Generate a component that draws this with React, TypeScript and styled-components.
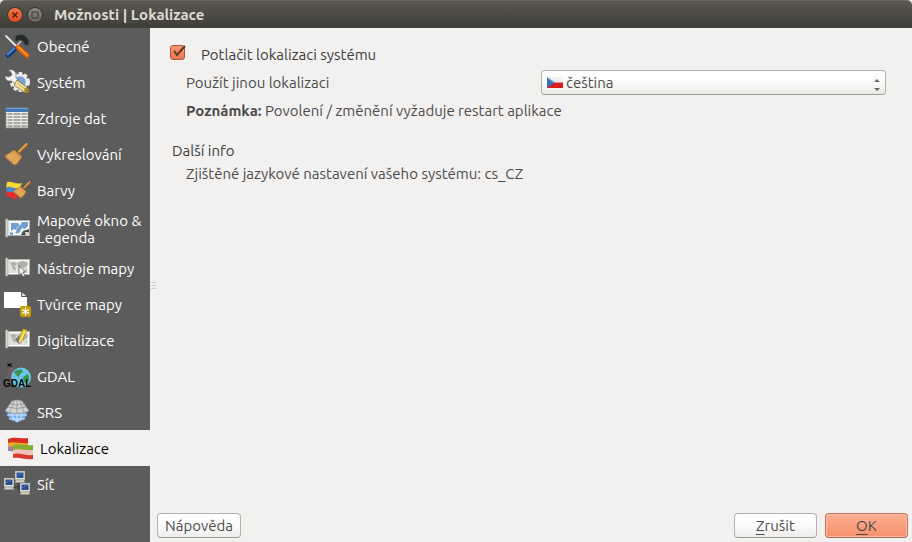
import React, { useState } from "react";
import styled, { createGlobalStyle, css } from "styled-components";

const GlobalStyle = createGlobalStyle`
  html, body, #root { height: 100%; }
  body { margin: 0; background: #f2f1f0; }
  *, *::before, *::after { box-sizing: border-box; }
  body, button, select, input {
    font-family: Ubuntu, "Noto Sans", "Open Sans", sans-serif;
    font-size: 15px;
    line-height: 17px;
    color: #4c4c4c;
  }
`;

const Dialog = styled.div`
  display: flex;
  flex-direction: column;
  min-height: 100%;
  background: #f2f1f0;
`;

const TitleBar = styled.header`
  display: flex;
  align-items: center;
  gap: 4px;
  height: 28px;
  padding: 0 7px;
  background: linear-gradient(#5a5850, #3e3d38);
  border-top: 1px solid #69675f;
  border-radius: 5px 5px 0 0;
`;

const WindowButton = styled.button<{ $close?: boolean }>`
  display: grid;
  place-items: center;
  width: 16px;
  height: 16px;
  padding: 0;
  border: 1px solid #35342f;
  border-radius: 50%;
  background: ${(p) => (p.$close ? "linear-gradient(#f4774e, #df4b1c)" : "linear-gradient(#8b8980, #67655d)")};
`;

const Title = styled.h1`
  margin: 0 0 0 7px;
  font-size: 15px;
  line-height: 20px;
  font-weight: 700;
  color: #dfdbd2;
`;

const Body = styled.div`
  display: flex;
  flex: 1;
`;

const Sidebar = styled.nav`
  display: flex;
  flex-direction: column;
  flex: 0 0 150px;
  background: #5c5c5c;
`;

const Item = styled.button<{ $selected: boolean }>`
  display: flex;
  align-items: center;
  gap: 6px;
  min-height: 36px;
  padding: 4px 4px 4px 3px;
  border: 0;
  background: none;
  color: #fff;
  text-align: left;
  svg { flex: none; }
  ${(p) =>
    p.$selected &&
    css`
      padding-left: 6px;
      background: #f2f1f0;
      color: #000;
    `}
`;

const Splitter = styled.div`
  display: flex;
  flex: 0 0 6px;
  align-items: center;
  justify-content: center;
`;

const Main = styled.main`
  display: flex;
  flex: 1;
  flex-direction: column;
  min-width: 0;
`;

const Settings = styled.section`
  flex: 1;
  padding: 13px 26px 0 14px;
`;

const CheckRow = styled.label`
  display: flex;
  align-items: center;
  gap: 14px;
  height: 26px;
  color: #3c3c3c;
`;

const CheckBox = styled.span`
  display: grid;
  margin-bottom: 4px;
  > * { grid-area: 1 / 1; }
  svg { pointer-events: none; }
`;

const CheckInput = styled.input`
  appearance: none;
  align-self: end;
  width: 15px;
  height: 15px;
  margin: 0;
  border: 1px solid #a9583e;
  border-radius: 3px;
  background: linear-gradient(#f79470, #ee7750);
  &:not(:checked) { border-color: #aaa; background: #fff; }
  &:not(:checked) + svg { visibility: hidden; }
`;

const Indented = styled.div`
  padding-left: 16px;
`;

const FieldRow = styled.div`
  display: grid;
  grid-template-columns: 1fr 1fr;
  column-gap: 10px;
  align-items: center;
  margin-top: 3px;
`;

const Picker = styled.div`
  position: relative;
`;

const LanguageSelect = styled.select`
  appearance: none;
  display: block;
  width: 100%;
  height: 25px;
  padding: 0 20px 0 24px;
  border: 1px solid #b4b2af;
  border-bottom-color: #9c9a97;
  border-radius: 4px;
  background: linear-gradient(#ffffff, #fbfbfa 50%, #e9e8e6);
`;

const FlagMark = styled.svg`
  position: absolute;
  left: 6px;
  top: 7px;
  pointer-events: none;
`;

const ArrowMark = styled.svg`
  position: absolute;
  right: 6px;
  top: 8px;
  pointer-events: none;
`;

const Note = styled.p`
  margin: 7px 0 0;
`;

const GroupTitle = styled.h2`
  margin: 23px 0 6px 2px;
  font-size: 15px;
  font-weight: 400;
  color: #3c3c3c;
`;

const Footer = styled.footer`
  display: flex;
  gap: 8px;
  padding: 0 4px 4px 1px;
`;

const PushButton = styled.button<{ $primary?: boolean }>`
  min-width: 83px;
  height: 25px;
  padding: 0 7px;
  border: 1px solid ${(p) => (p.$primary ? "#b77a62" : "#b4b2af")};
  border-bottom-color: ${(p) => (p.$primary ? "#a36b55" : "#9c9a97")};
  border-radius: 4px;
  background: ${(p) => (p.$primary ? "linear-gradient(#fdb093, #f58f6a)" : "linear-gradient(#ffffff, #fbfbfa 50%, #eeedeb)")};
  box-shadow: ${(p) => (p.$primary ? "inset 0 0 0 1px #ffb99f" : "none")};
`;

const Mnemonic = styled.span`
  text-decoration: underline;
  text-underline-offset: 3px;
  text-decoration-skip-ink: none;
`;

const Spacer = styled.span`
  flex: 1;
`;

const Icon = ({ children }: { children: React.ReactNode }) => (
  <svg width="28" height="28" viewBox="0 0 28 28" aria-hidden="true">
    {children}
  </svg>
);

const ToolsIcon = () => (
  <Icon>
    <path d="M3 4l10 10" stroke="#e4e4e4" strokeWidth="1.800" strokeLinecap="round" />
    <path d="M12 5c4-3 8-3 11 0l3 4-1 4-3 0-2-4-3-1-3 1-2-1 1-2z" fill="#252929" stroke="#3d4747" strokeWidth=".6" />
    <path d="M18 9L10 18" stroke="#c8c8c8" strokeWidth="1.500" />
    <path d="M12 17L5 23.500" stroke="#163e70" strokeWidth="5" strokeLinecap="round" />
    <path d="M11.500 16L4.500 22.500" stroke="#4d86c5" strokeWidth="1.800" strokeLinecap="round" />
    <path d="M15 15.500l9 8" stroke="#e86400" strokeWidth="4.500" strokeLinecap="round" />
    <path d="M15.500 15l8.500 8" stroke="#ff9b28" strokeWidth="1.600" strokeLinecap="round" />
  </Icon>
);

const SystemIcon = () => (
  <Icon>
    <circle cx="17" cy="14" r="8.500" fill="none" stroke="#eeeeec" strokeWidth="3" strokeDasharray="3.500 2" />
    <circle cx="17" cy="14" r="7" fill="#76a4d7" stroke="#ededed" strokeWidth="2.500" />
    <path d="M5 2c5-1 8 1 8 5v3l5 5-3 4-6-6-3 0C4 13 2 11 2 8l4 1 3-2-1-3z" fill="#f1f1ef" stroke="#666" strokeWidth=".6" />
    <path d="M11 17l3-5 11 8-3 5z" fill="#f0e2a0" stroke="#765d1c" strokeWidth=".7" />
    <path d="M14 15l8 6" stroke="#baa04c" strokeWidth=".8" />
    <ellipse cx="24" cy="22.500" rx="2.200" ry="2.500" fill="#e2c457" stroke="#644d11" strokeWidth=".8" />
    <circle cx="24" cy="22.500" r="1" fill="#594510" />
  </Icon>
);

const TableIcon = () => (
  <Icon>
    <rect x="3" y="4" width="22" height="20" fill="#cdcdc7" stroke="#8b8b86" strokeWidth=".7" />
    <rect x="3" y="4" width="22" height="4" fill="#4078b5" />
    <path d="M3 4.500h22" stroke="#80addc" strokeWidth=".8" />
    <path d="M3 8.500h22M3 11.500h22M3 14.500h22M3 17.500h22M3 20.500h22" stroke="#ecece8" />
    {[10, 13, 16, 19, 22].map((y) => (
      <path key={y} d={`M5 ${y}h4M11 ${y}h6M19 ${y}h4.500`} stroke="#858580" />
    ))}
  </Icon>
);

const BroomShape = () => (
  <>
    <path d="M16 12l7.500-7.500" stroke="#9d611b" strokeWidth="3" strokeLinecap="round" />
    <path d="M16 11.500l7.500-7.500" stroke="#eaa54a" strokeWidth="1.800" strokeLinecap="round" />
    <path d="M11 10l8 7-5 7-3 1-9-8 1-2z" fill="#dca055" stroke="#a86d2b" strokeWidth=".7" />
    <path d="M5 17l5-3M7 19l5-3M10 21l4-3M11 23l5-4" stroke="#edbe7b" strokeWidth=".7" />
    <path d="M11.500 11l7 6" stroke="#c98a3d" strokeWidth="1.300" />
  </>
);

const BroomIcon = () => (
  <Icon>
    <BroomShape />
  </Icon>
);

const ColorsIcon = () => (
  <Icon>
    <path d="M4 6c5-1 9 3 15 1l-3 6C11 14 8 11 3 12z" fill="#f8dc32" />
    <path d="M4 11c4-1 7 2 12 1l-1 5c-5 1-8-1-12-1z" fill="#4786ca" />
    <path d="M3 16c4-1 7 1 12 1l-1 6c-4 0-7-2-11-3z" fill="#e62b2b" />
    <g transform="translate(9 3) scale(.75)">
      <BroomShape />
    </g>
  </Icon>
);

const MapBase = ({ blue }: { blue?: boolean }) => (
  <>
    <rect x="4.500" y="5.500" width="22" height="15" fill="#e6e6e1" stroke="#b5b5b0" strokeWidth=".8" />
    <rect x="5.500" y="6.500" width="20" height="13" fill={blue ? "#f3f5f4" : "#e0e0dc"} stroke="#fff" />
    {blue ? (
      <path d="M8 8h7l2 3-3 1-1 3-2-1-3 2zM19 7h6v4l-3 3-3-1-3 5-3-1 1-4 3-2zM7 17l3 1v2H7zM12 17l3 0-1 2z" fill="#719fce" />
    ) : (
      <path d="M7 9l3-1 4 1-1 2-2 1 2 2-1 3-2-2-1-3zM15 9l3-2h3l4 2-1 3-2 1-1 2-2-2-1 3-2-1-1-3-1-2zM22 16l2-1v2z" fill="#b0b0aa" />
    )}
    <path d="M2.500 4h2.500v18H2.500z" fill="#dcdcd7" stroke="#8d8d88" strokeWidth=".7" />
  </>
);

const MapIcon = () => (
  <Icon>
    <MapBase blue />
    <path d="M18 20l2-4 6-2v4l-3 2z" fill="#4b4d4b" />
    <path d="M22 17h4l-3 4z" fill="#ddd" />
  </Icon>
);

const MapToolIcon = () => (
  <Icon>
    <MapBase />
    <path d="M16 12v9l2-2 2 4 2-1-2-4h3z" fill="#eeeeee" stroke="#4b4b4b" strokeWidth=".7" />
  </Icon>
);

const ComposerIcon = () => (
  <Icon>
    <path d="M.5 1.500h18l6 5v12H.5z" fill="#fff" stroke="#3f3f3f" strokeWidth=".7" />
    <path d="M18.500 1.500v5h6z" fill="#ddd" stroke="#333" strokeWidth=".8" />
    <rect x="17" y="16" width="11" height="11" rx="2" fill="#c59c08" />
    <path d="M22.500 17.500v8M19 19.500l7 4M19 23.500l7-4" stroke="#fff" strokeWidth="1.300" />
  </Icon>
);

const DigitizeIcon = () => (
  <Icon>
    <MapBase />
    <path d="M12 13l4-3 3 2 0 4-3 2-2-2z" fill="#777" />
    <path d="M20 3l4 1-5 11-3 2v-4z" fill="#f3d427" stroke="#a08718" strokeWidth=".7" />
    <path d="M16 14l3 1-3 2z" fill="#eedfad" />
    <path d="M22 5l-4 9" stroke="#fff49b" strokeWidth=".8" />
  </Icon>
);

const GdalIcon = () => (
  <Icon>
    <circle cx="18" cy="15.500" r="10" fill="#69c6e8" />
    <path d="M11 10c2-2 6-3 8-2l1 2-3 2-1 3-3-2zM20 15l5-3c2 4 1 7-1 10l-3-2z" fill="#37914b" />
    <path d="M8 6v11M7 6l-3 12M9 6l7 10" stroke="#bd6674" strokeWidth=".7" strokeDasharray="1 1" />
    <path d="M4 1l2 1 3-1-1 2 1 2-3-1-2 1 1-2z" fill="#111" />
    <text x="0" y="25" fontFamily="Ubuntu Condensed, Liberation Sans Narrow, Liberation Sans, sans-serif" fontSize="10" fontWeight="700" fill="#050505">GDAL</text>
  </Icon>
);

const GlobeIcon = () => (
  <Icon>
    <circle cx="14" cy="14" r="10" fill="#79b3ec" stroke="#4779a8" strokeWidth=".7" />
    <path d="M4 17h20M6 21h16M14 14v10M9 14c0 5 1 7 5 10M19 14c0 5-1 7-5 10" stroke="#d9eaff" fill="none" />
    <path d="M9 3q5-2 10 0l7 10q-12 5-24 0z" fill="#d2d4d2" stroke="#8c8f8d" strokeWidth=".7" />
    <path d="M7 6q7 2 14 0M5 9q9 3 18 0M11 3L7 14M14 2v13M17 3l4 11" stroke="#858987" strokeWidth=".7" fill="none" />
  </Icon>
);

const FlagsIcon = () => (
  <Icon>
    <path d="M2 5c6-3 12 0 20-1v6C14 11 8 8 2 10z" fill="#d62f22" />
    <path d="M2 9c6-2 12 1 20 0v5C14 15 8 12 2 14z" fill="#edaa2d" />
    <path d="M2 13c2-1 4-1 6 0v5c-2-1-4-1-6-1z" fill="#9a80ac" />
    <path d="M7 11c7-2 12 1 20 0v5c-8 2-13-1-20 1z" fill="#87ab2e" />
    <path d="M7 16c7-2 12 1 20 0v5c-8 1-13-1-20 0z" fill="#eec3bb" />
    <path d="M7 20c7-2 12 2 20 1v4c-8 1-13-2-20-1z" fill="#d83b2e" />
  </Icon>
);

const Computer = ({ x, y }: { x: number; y: number }) => (
  <g transform={`translate(${x} ${y})`}>
    <rect x=".5" y=".5" width="9" height="8" fill="#e5e5df" stroke="#c4c3bc" />
    <rect x="1.500" y="1.500" width="7" height="5.500" fill="#254f91" />
    <path d="M2 5l5-3" stroke="#5079b3" />
    <path d="M1 9h8l1 2.500H0z" fill="#d5d4cc" stroke="#8d8d87" strokeWidth=".6" />
  </g>
);

const NetworkIcon = () => (
  <Icon>
    <path d="M8 17h8v3h5M16 17v-4" fill="none" stroke="#343434" />
    <Computer x={12} y={1} />
    <Computer x={1} y={8} />
    <Computer x={17} y={13} />
  </Icon>
);

const sections: { label: string; icon: React.ComponentType }[] = [
  { label: "Obecné", icon: ToolsIcon },
  { label: "Systém", icon: SystemIcon },
  { label: "Zdroje dat", icon: TableIcon },
  { label: "Vykreslování", icon: BroomIcon },
  { label: "Barvy", icon: ColorsIcon },
  { label: "Mapové okno & Legenda", icon: MapIcon },
  { label: "Nástroje mapy", icon: MapToolIcon },
  { label: "Tvůrce mapy", icon: ComposerIcon },
  { label: "Digitalizace", icon: DigitizeIcon },
  { label: "GDAL", icon: GdalIcon },
  { label: "SRS", icon: GlobeIcon },
  { label: "Lokalizace", icon: FlagsIcon },
  { label: "Síť", icon: NetworkIcon },
];

export default function App() {
  const [selected, setSelected] = useState("Lokalizace");
  return (
    <>
      <GlobalStyle />
      <Dialog>
        <TitleBar>
          <WindowButton $close aria-label="Zavřít">
            <svg width="8" height="8" viewBox="0 0 8 8">
              <path d="M1.500 1.500l5 5M6.500 1.500l-5 5" stroke="#4a2113" strokeWidth="1.300" />
            </svg>
          </WindowButton>
          <WindowButton aria-label="Maximalizovat">
            <svg width="8" height="8" viewBox="0 0 8 8">
              <rect x="1" y="1" width="6" height="6" fill="none" stroke="#393832" />
            </svg>
          </WindowButton>
          <Title>Možnosti | Lokalizace</Title>
        </TitleBar>
        <Body>
          <Sidebar>
            {sections.map(({ label, icon: SectionIcon }) => (
              <Item key={label} $selected={label === selected} onClick={() => setSelected(label)}>
                <SectionIcon />
                <span>{label}</span>
              </Item>
            ))}
          </Sidebar>
          <Splitter>
            <svg width="5" height="9" viewBox="0 0 5 9">
              <path d="M0 1.500h5M0 4.500h5M0 7.500h5" stroke="#cfcdca" />
            </svg>
          </Splitter>
          <Main>
            <Settings>
              <CheckRow>
                <CheckBox>
                  <CheckInput type="checkbox" defaultChecked />
                  <svg width="17" height="15" viewBox="0 0 17 15">
                    <path d="M4 6l3 4 8-9" fill="none" stroke="#5a3a2e" strokeWidth="2" />
                  </svg>
                </CheckBox>
                Potlačit lokalizaci systému
              </CheckRow>
              <Indented>
                <FieldRow>
                  <label htmlFor="language">Použít jinou lokalizaci</label>
                  <Picker>
                    <LanguageSelect id="language" defaultValue="cs">
                      <option value="cs">čeština</option>
                    </LanguageSelect>
                    <FlagMark width="16" height="11" viewBox="0 0 16 11">
                      <path d="M0 0h16v5.500H0z" fill="#f1f1f1" />
                      <path d="M0 5.500h16V11H0z" fill="#dd1c1c" />
                      <path d="M0 0l8 5.500L0 11z" fill="#3e6fb5" />
                      <path d="M.5 1l6 4.500" stroke="#8eb1df" />
                    </FlagMark>
                    <ArrowMark width="6" height="13" viewBox="0 0 6 13">
                      <path d="M0 4l3-3 3 3zM0 10l3 3 3-3z" fill="#686868" />
                    </ArrowMark>
                  </Picker>
                </FieldRow>
                <Note>
                  <b>Poznámka:</b> Povolení / změnění vyžaduje restart aplikace
                </Note>
              </Indented>
              <GroupTitle>Další info</GroupTitle>
              <Indented>Zjištěné jazykové nastavení vašeho systému: cs_CZ</Indented>
            </Settings>
            <Footer>
              <PushButton>Nápověda</PushButton>
              <Spacer />
              <PushButton>
                <Mnemonic>Z</Mnemonic>rušit
              </PushButton>
              <PushButton $primary>
                <Mnemonic>O</Mnemonic>K
              </PushButton>
            </Footer>
          </Main>
        </Body>
      </Dialog>
    </>
  );
}
